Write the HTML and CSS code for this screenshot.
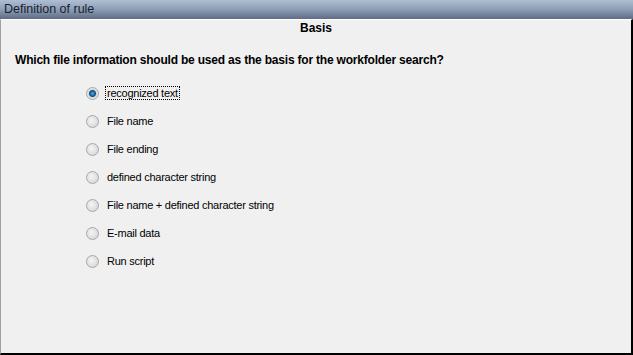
FILE: index.html
```html
<!DOCTYPE html>
<html lang="en">
<head>
  <meta charset="UTF-8" />
  <title>Definition of rule</title>
  <link rel="stylesheet" href="styles.css">
</head>
<body>
  <div class="window">
    <div class="titlebar">Definition of rule</div>
    <div class="panel">
      <div class="heading">Basis</div>
      <p class="question">Which file information should be used as the basis for the workfolder search?</p>

      <div class="options">
        <label class="option"><span class="radio checked"></span><span class="label focused">recognized text</span></label>
        <label class="option"><span class="radio"></span><span class="label">File name</span></label>
        <label class="option"><span class="radio"></span><span class="label">File ending</span></label>
        <label class="option"><span class="radio"></span><span class="label">defined character string</span></label>
        <label class="option"><span class="radio"></span><span class="label">File name + defined character string</span></label>
        <label class="option"><span class="radio"></span><span class="label">E-mail data</span></label>
        <label class="option"><span class="radio"></span><span class="label">Run script</span></label>
      </div>
    </div>
  </div>
</body>
</html>
```

FILE: styles.css
```css
html, body {
  margin: 0;
  padding: 0;
  background: #f0f0f0;
}
body {
  font-family: 'Liberation Sans', sans-serif;
  color: #000;
}
.window {
  width: 633px;
  height: 355px;
  display: flex;
  flex-direction: column;
}
.titlebar {
  height: 19px;
  line-height: 18px;
  padding-left: 4px;
  font-size: 12.5px;
  color: #1a2030;
  background: linear-gradient(#b0bed2, #8c9db5 50%, #5d6c84);
}
.panel {
  flex: 1;
  border-top: 1px solid #fff;
  border-left: 1px solid #a0a0a0;
  border-right: 2px solid #000;
  border-bottom: 2px solid #000;
  background: #f0f0f0;
}
.heading {
  text-align: center;
  font-weight: bold;
  font-size: 12px;
  margin-top: 1px;
  height: 15px;
  line-height: 15px;
}
.question {
  margin: 17px 0 0 14px;
  font-weight: bold;
  font-size: 12px;
  line-height: 15px;
  letter-spacing: -0.2px;
}
.options {
  display: flex;
  flex-direction: column;
  gap: 14px;
  margin: 18px 0 0 85px;
}
.option {
  display: flex;
  align-items: center;
  height: 14px;
  font-size: 11px;
  letter-spacing: -0.25px;
}
.radio {
  width: 11px;
  height: 11px;
  border-radius: 50%;
  border: 1px solid #a7a7a7;
  background: radial-gradient(circle at 40% 40%, #f4f4f4, #d0d0d0);
  margin-right: 6px;
  flex: none;
}
.radio.checked {
  background: radial-gradient(circle, #5fb0e4 0, #1c6ca6 2px, #0f4f82 3px, #d8d8d8 4px, #eeeeee 6px);
}
.label {
  padding: 0 1px;
  border: 1px dotted transparent;
}
.label.focused {
  border-color: #000;
}
```
